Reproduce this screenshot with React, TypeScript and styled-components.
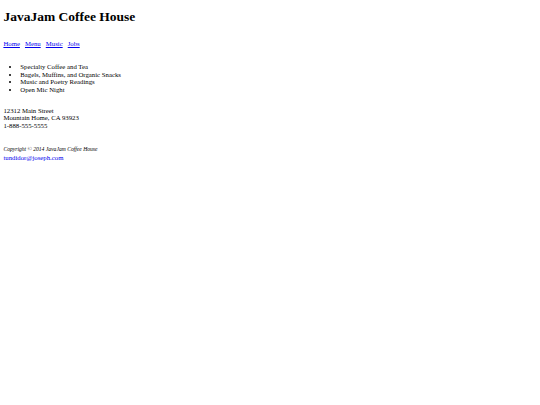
import React from 'react';
import styled, { createGlobalStyle } from 'styled-components';

const GlobalStyle = createGlobalStyle`
  body {
    margin: 3.4px;
    font-family: "Liberation Serif", "Times New Roman", serif;
    font-size: 6.75px;
    line-height: 7.5px;
    color: #000;
    background: #fff;
  }
  a {
    color: #0000ee;
  }
`;

const navLinks = ['Home', 'Menu', 'Music', 'Jobs'];

const features = [
  'Specialty Coffee and Tea',
  'Bagels, Muffins, and Organic Snacks',
  'Music and Poetry Readings',
  'Open Mic Night',
];

const App: React.FC = () => {
  return (
    <StyledPage>
      <GlobalStyle />
      <StyledHeader>
        <h1>JavaJam Coffee House</h1>
      </StyledHeader>
      <StyledNav>
        {navLinks.map((link, i) => (
          <React.Fragment key={link}>
            {i > 0 && '\u00a0\u00a0 '}
            <a href="#">{link}</a>
          </React.Fragment>
        ))}
      </StyledNav>
      <main>
        <StyledList>
          {features.map((f) => (
            <li key={f}>{f}</li>
          ))}
        </StyledList>
        <StyledAddress>
          12312 Main Street
          <br />
          Mountain Home, CA 93923
          <br />
          1-888-555-5555
        </StyledAddress>
      </main>
      <StyledFooter>
        <small>
          <i>Copyright © 2014 JavaJam Coffee House</i>
        </small>
        <br />
        <a href="mailto:tundidor@joseph.com">tundidor@joseph.com</a>
      </StyledFooter>
    </StyledPage>
  );
};

const StyledPage = styled.div``;

const StyledHeader = styled.header`
  h1 {
    margin: 5.5px 0 16px 0;
    font-size: 13.5px;
    line-height: 15.5px;
    font-weight: bold;
  }
`;

const StyledNav = styled.nav`
  margin: 0;
`;

const StyledList = styled.ul`
  margin: 15.5px 0 13.5px 0;
  padding-left: 16.9px;
`;

const StyledAddress = styled.div`
  margin-bottom: 16px;
`;

const StyledFooter = styled.footer`
  small {
    font-size: 5.625px;
  }
`;

export default App;
